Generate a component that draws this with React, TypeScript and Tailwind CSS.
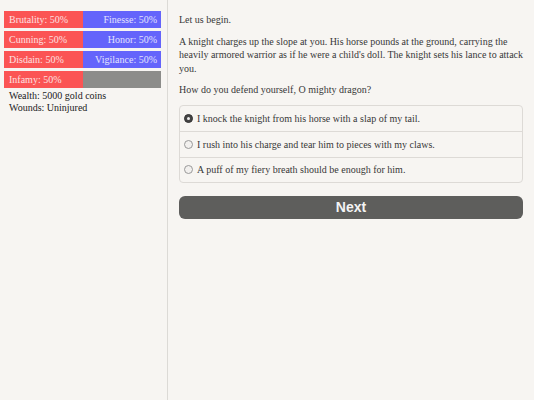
import { useState } from 'react';

const stats = [
  { left: 'Brutality', right: 'Finesse', value: 50 },
  { left: 'Cunning', right: 'Honor', value: 50 },
  { left: 'Disdain', right: 'Vigilance', value: 50 },
];

const choices = [
  'I knock the knight from his horse with a slap of my tail.',
  'I rush into his charge and tear him to pieces with my claws.',
  'A puff of my fiery breath should be enough for him.',
];

export default function App() {
  const [selected, setSelected] = useState(0);

  return (
    <div className="flex h-[400px] w-[534px] bg-[#f7f5f2] font-['Liberation_Serif',serif] text-[#383838] overflow-hidden">
      {/* Stats sidebar */}
      <aside className="w-[168px] shrink-0 border-r border-[#dcdad6] pl-[4px] pr-[6px] pt-[11px]">
        <div className="flex flex-col gap-[3px]">
          {stats.map((s) => (
            <div key={s.left} className="flex h-[17px] text-[10px] leading-[17px] text-[#fde0e0]">
              <div className="w-1/2 bg-[#fb5454] pl-[5px]">{s.left}: {s.value}%</div>
              <div className="w-1/2 bg-[#6464fb] pr-[4px] text-right text-[#e2e2ff]">{s.right}: {s.value}%</div>
            </div>
          ))}
          <div className="flex h-[17px] text-[10px] leading-[17px] text-[#fde0e0]">
            <div className="w-1/2 bg-[#fb5454] pl-[5px]">Infamy: 50%</div>
            <div className="w-1/2 bg-[#8c8c8a]"></div>
          </div>
        </div>
        <div className="mt-[2px] pl-[5px] text-[10px] leading-[12px] text-[#222]">
          <p>Wealth: 5000 gold coins</p>
          <p>Wounds: Uninjured</p>
        </div>
      </aside>

      {/* Main story */}
      <main className="flex-1 px-[11px] pt-[13px] text-[10px] leading-[13.5px]">
        <p>Let us begin.</p>
        <p className="mt-[8px]">
          A knight charges up the slope at you. His horse pounds at the ground, carrying the heavily armored warrior as if he were a child's doll. The knight sets his lance to attack you.
        </p>
        <p className="mt-[8px]">How do you defend yourself, O mighty dragon?</p>

        <div className="mt-[8px] rounded-[4px] border border-[#dddad6] text-[10px]">
          {choices.map((c, i) => (
            <label
              key={c}
              onClick={() => setSelected(i)}
              className={`flex h-[25.5px] items-center gap-[4px] pl-[4px] cursor-pointer ${i > 0 ? 'border-t border-[#dddad6]' : ''}`}
            >
              <span
                className={`flex h-[9px] w-[9px] items-center justify-center rounded-full border ${
                  selected === i ? 'border-[#333] bg-[#444]' : 'border-[#999] bg-[#f2f0ee]'
                }`}
              >
                {selected === i && <span className="h-[3px] w-[3px] rounded-full bg-[#eee]" />}
              </span>
              <span>{c}</span>
            </label>
          ))}
        </div>

        <button className="mt-[13px] h-[23px] w-full rounded-[6px] bg-[#5e5e5c] font-['Liberation_Sans',sans-serif] text-[14px] font-bold text-[#f4f4f4]">
          Next
        </button>
      </main>
    </div>
  );
}
